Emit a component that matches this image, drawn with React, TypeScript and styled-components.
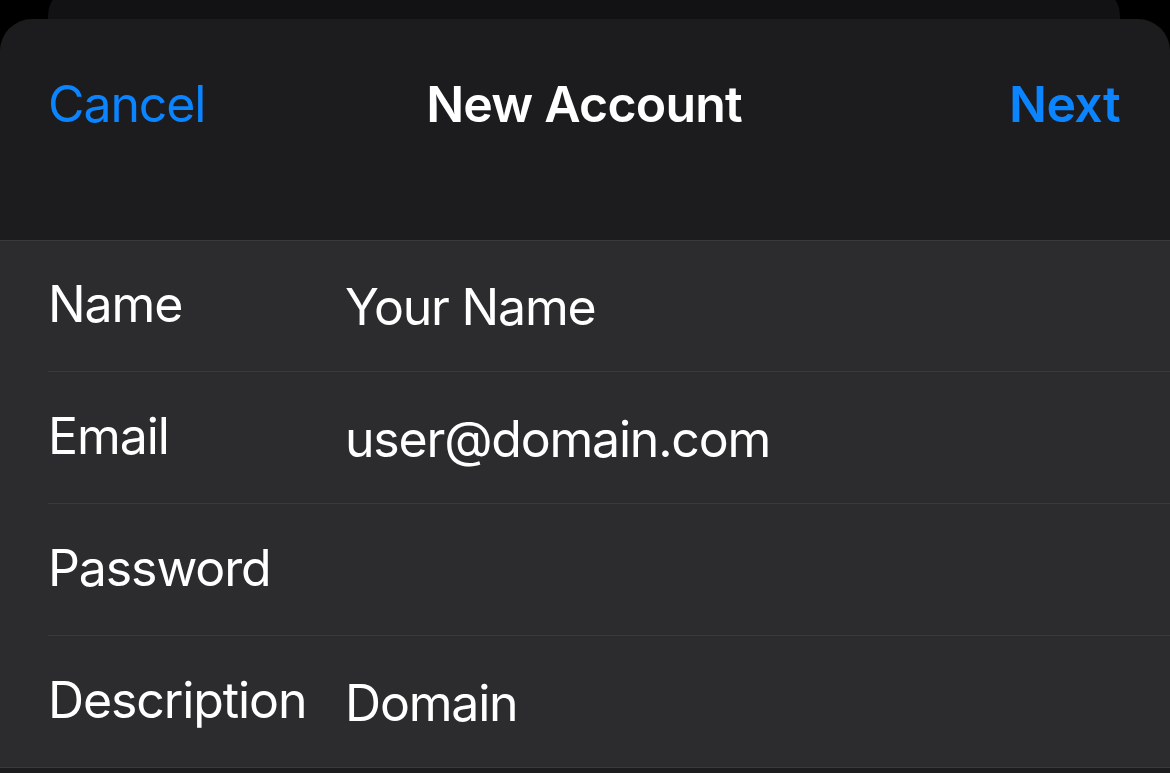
import React from "react";
import styled, { createGlobalStyle } from "styled-components";

const Global = createGlobalStyle`
  html, body { margin: 0; padding: 0; background: #000; }
  body { font-family: Inter, "Noto Sans", "Liberation Sans", sans-serif; -webkit-font-smoothing: antialiased; }
  * { box-sizing: border-box; }
`;

const Page = styled.div`
  width: 1170px;
  height: 773px;
  overflow: hidden;
  background: #000;
  display: flex;
  flex-direction: column;
`;

const BackCard = styled.div`
  margin: -14px 50px 0 48px;
  height: 33px;
  background: #121214;
  border-radius: 30px 30px 0 0;
  flex-shrink: 0;
`;

const Sheet = styled.div`
  flex: 1;
  background: #1c1c1e;
  border-radius: 32px 32px 0 0;
  display: flex;
  flex-direction: column;
`;

const NavBar = styled.div`
  height: 222px;
  padding: 55px 50px 0 48px;
  display: grid;
  grid-template-columns: 1fr auto 1fr;
  align-items: start;
  border-bottom: 1px solid #3a3a3c;
`;

const NavButton = styled.span<{ $bold?: boolean; $align: "left" | "right" }>`
  color: #0a84ff;
  font-size: 50px;
  line-height: 60px;
  font-weight: ${(p) => (p.$bold ? 600 : 400)};
  letter-spacing: ${(p) => (p.$bold ? "-0.6px" : "-1.1px")};
  text-align: ${(p) => p.$align};
`;

const Title = styled.span`
  color: #fff;
  font-size: 50px;
  line-height: 60px;
  font-weight: 600;
  letter-spacing: -0.8px;
  text-align: center;
`;

const List = styled.div`
  background: #2c2c2e;
  border-bottom: 1px solid #3a3a3c;
  display: flex;
  flex-direction: column;
`;

const Row = styled.div`
  margin-left: 48px;
  height: 132px;
  display: grid;
  grid-template-columns: 297px 1fr;
  align-items: center;
  border-bottom: 1px solid #3a3a3c;
  &:first-child { height: 131px; }
  &:last-child { border-bottom: none; height: 131px; }
`;

const Label = styled.span`
  color: #fff;
  font-size: 50px;
  letter-spacing: -1.1px;
  line-height: 60px;
  white-space: nowrap;
  margin-top: -4px;
`;

const Value = styled.span`
  color: #fff;
  font-size: 50px;
  letter-spacing: -1.2px;
  line-height: 60px;
  white-space: nowrap;
  margin-top: 2px;
`;

const rows: { label: string; value: string }[] = [
  { label: "Name", value: "Your Name" },
  { label: "Email", value: "user@domain.com" },
  { label: "Password", value: "" },
  { label: "Description", value: "Domain" },
];

export default function App() {
  return (
    <Page>
      <Global />
      <BackCard />
      <Sheet>
        <NavBar>
          <NavButton $align="left">Cancel</NavButton>
          <Title>New Account</Title>
          <NavButton $align="right" $bold>
            Next
          </NavButton>
        </NavBar>
        <List>
          {rows.map((r) => (
            <Row key={r.label}>
              <Label>{r.label}</Label>
              <Value>{r.value}</Value>
            </Row>
          ))}
        </List>
      </Sheet>
    </Page>
  );
}
